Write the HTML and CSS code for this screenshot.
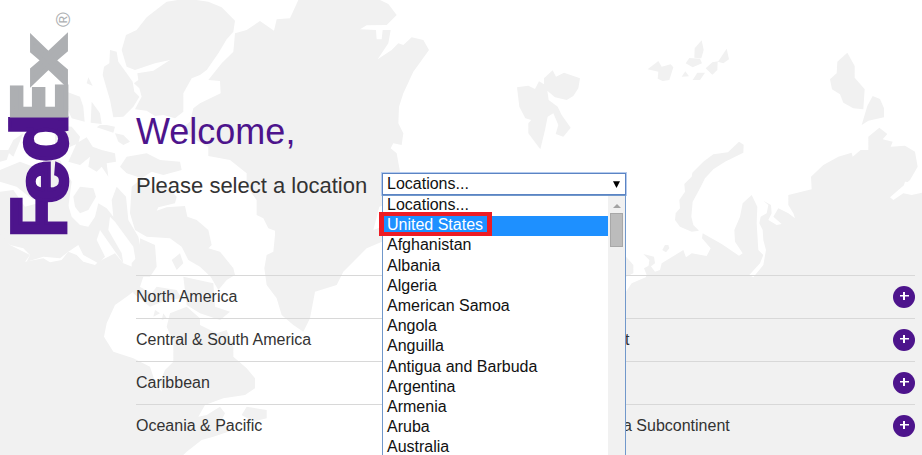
FILE: index.html
```html
<!DOCTYPE html>
<html lang="en">
<head>
<meta charset="utf-8">
<title>FedEx</title>
<link rel="stylesheet" href="styles.css">
</head>
<body>
<svg class="map" width="922" height="455" viewBox="0 0 2766 1365" aria-hidden="true">
  <!-- Greenland -->
  <path class="land" d="M895 0L870 55 830 58 822 92 780 63 740 90 705 100 700 155 665 190 625 240 660 243 662 280 600 310 580 325 570 365 545 385 570 410 625 440 625 468 690 480 740 520 740 560 770 600 770 645 790 655 805 685 825 692 825 705 820 755 800 765 793 805 800 855 830 895 845 945 880 975 910 995 930 955 945 875 1010 855 1030 815 1100 745 1146 725 1146 680 1120 690 1138 620 1200 600 1200 515 1190 460 1172 445 1180 430 1205 435 1210 400 1195 370 1197 320 1210 280 1240 215 1287 150 1270 120 1235 112 1210 135 1195 130 1175 150 1133 178 1165 130 1172 90 1148 90 1145 118 1130 118 1128 90 1080 88 1100 76 1160 75 1190 45 1165 12 1140 0Z"/>
  <!-- Ellesmere and the Arctic islands -->
  <path class="land" d="M500 5L560-4 625 5 665 22 705 62 700 95 680 118 655 160 620 210 600 225 575 235 550 280 550 335 525 355 490 345 465 348 440 332 405 328 425 290 418 265 402 250 415 240 412 220 460 212 510 180 465 190 405 210 380 200 365 150 378 105 410 90 440 52Z"/>
  <path class="land" d="M330 150L350 155 355 185 380 220 398 245 403 275 418 290 400 320 370 350 340 352 330 300 308 225 312 200 328 190ZM265 232L278 258 260 250ZM200 275L240 290 250 320 254 365 215 355 200 320ZM275 305L300 340 305 372 272 368ZM320 375L345 380 340 398 290 382 300 375ZM345 400L370 405 390 425 370 435 355 425ZM165 375L215 380 240 410 235 430 200 445 165 430ZM230 430L260 412 278 440 305 450 345 460 348 485 320 490 325 530 305 500 290 515 265 500 270 470 240 495 205 485ZM380 470L440 460 480 480 540 485 545 510 490 525 455 515 425 535 380 520 360 500ZM240 560L280 565 288 590 265 630 240 640 225 620 220 590ZM0 450L30 450 20 480 0 485ZM70 400L40 470 22 455 40 420ZM130 480L180 480 215 545 205 620 160 640 110 590ZM0 510L60 485 100 500 100 600 50 560 0 545Z"/>
  <!-- Baffin -->
  <path class="land" d="M395 560L420 540 460 570 500 560 530 590 525 610 475 622 470 632 500 622 555 618 562 650 590 660 625 690 635 735 625 745 660 755 700 805 705 825 680 840 655 870 632 830 600 800 565 780 545 740 510 715 440 710 405 690 390 640ZM420 715L465 735 470 800 450 830 395 830 395 790 420 760Z"/>
  <!-- North America -->
  <path class="land" d="M0 575L40 570 75 620 130 605 200 600 215 650 240 675 265 680 285 650 295 610 320 625 340 650 335 600 350 560 378 590 385 660 415 710 425 760 410 800 400 740 345 665 330 650 325 690 365 760 370 790 300 690 290 720 315 770 295 790 250 765 235 735 205 755 180 775 130 770 80 785 90 765 70 745 30 735 0 715Z"/>
  <path class="land" d="M0 700L30 735 90 765 75 785 130 775 150 787 185 780 205 755 230 765 250 785 285 795 295 785 345 760 370 790 400 802 430 790 455 800 430 830 420 860 380 890 345 915 320 970 312 1010 340 1055 400 1075 450 1100 465 1145 485 1175 480 1145 495 1110 520 1085 520 1025 500 980 510 940 560 920 600 955 600 975 650 1000 680 990 700 1040 700 1070 740 1105 765 1135 765 1165 735 1185 670 1195 615 1215 595 1250 620 1245 660 1220 675 1240 660 1270 700 1290 640 1310 605 1320 560 1355 550 1365 0 1365ZM515 780L540 760 550 790 530 810ZM740 1220L800 1230 800 1255 760 1265 725 1245Z"/>
  <path class="land" d="M400 850L455 880 470 860 530 870 545 895 500 900 450 920 400 880ZM465 930L480 940 460 950ZM490 940L500 955 485 960ZM550 830L640 850 645 920 690 935 660 960 600 940 560 915Z"/>
  <!-- Svalbard -->
  <path class="land" d="M1551 262L1585 257 1605 267 1617 244 1632 253 1632 235 1658 211 1668 230 1692 218 1740 235 1735 265 1720 288 1700 300 1665 292 1642 272 1646 300 1673 320 1685 345 1712 383 1690 410 1667 402 1675 375 1660 340 1643 350 1635 390 1621 448 1585 400 1585 370 1594 360 1576 355 1558 320Z"/>
  <!-- Franz Josef Land and Severnaya Zemlya -->
  <path class="land" d="M1943 208L1975 183 1985 200 2012 193 2020 202 2008 240 1988 243 1973 236 1975 215ZM2105 121L2111 150 2104 175 2083 173 2084 145ZM2068 174L2100 176 2106 190 2078 202 2057 190ZM2078 240L2092 218 2115 218 2100 240ZM2045 230L2056 214 2067 229ZM2117 205L2137 187 2155 184 2180 146 2187 178 2170 190 2153 185 2152 210 2137 224Z"/>
  <path class="land" d="M2542 158L2564 198 2564 233 2594 268 2590 328 2560 325 2530 308 2520 283 2496 268 2490 238 2510 220 2512 185ZM2618 288L2640 297 2652 325 2652 352 2605 362 2585 375 2602 318Z"/>
  <!-- Novaya Zemlya -->
  <path class="land" d="M2217 425L2231 434 2230 458 2175 485 2140 508 2115 535 2100 565 2078 605 2074 650 2080 675 2097 692 2075 695 2040 680 2025 660 2027 640 2040 625 2038 600 2055 575 2053 552 2075 530 2077 518 2110 485 2140 463 2184 457Z"/>
  <!-- Eurasia -->
  <path class="land" d="M2365 585L2435 568 2433 530 2470 495 2515 470 2555 458 2558 470 2582 450 2605 450 2605 410 2638 383 2662 402 2648 418 2678 425 2672 440 2715 437 2745 455 2753 500 2730 540 2670 592 2680 600 2710 580 2735 585 2766 578V1365H1878V875L1895 850 1937 832 1940 825 1932 805 1950 795 1965 815 1980 810 1985 790 2050 750 2058 772 2075 760 2120 768 2132 745 2106 715 2108 700 2165 732 2217 767 2228 760 2205 725 2203 690 2220 650 2228 610 2255 585 2272 620 2270 670 2275 750 2290 765 2280 790 2248 825 2260 832 2290 795 2298 750 2290 720 2288 690 2278 670 2282 650 2300 640 2305 615 2290 602 2313 615 2315 640 2305 660 2330 675 2345 672 2320 650 2335 625 2365 640 2385 655 2380 640 2365 615Z"/>
  <path class="sea" d="M2695 582L2710 562 2720 580 2730 565 2712 555 2715 545 2747 548 2745 580 2725 575Z"/>
  <path class="land" d="M1987 750L1995 735 2005 735 2008 745 1998 757ZM1930 762L1962 770 1965 790 1945 805 1948 780ZM1878 770L1900 795 1900 820 1878 830Z"/>
</svg>

<header class="brand">
  <svg class="logo" width="110" height="245" viewBox="0 0 110 245" role="img" aria-label="FedEx">
    <g class="wordmark" transform="translate(67 235) rotate(-90)">
      <text class="fed" transform="translate(-2 -1) scale(.8 .96)">F</text>
      <text class="fed" transform="translate(31.5 0) scale(.94 .9)">e</text>
      <text class="fed" transform="translate(73 0) scale(.97 .95)">d</text>
      <text class="ex heavy" transform="translate(115.5 -1) scale(.65 .95)">E</text>
      <text class="ex heavy" transform="translate(151 -1) scale(1.04 .78)">x</text>
      <text class="reg" x="208" y="3">®</text>
    </g>
  </svg>
</header>

<main class="content">
  <h1 class="title">Welcome,</h1>
  <div class="picker">
    <span class="prompt">Please select a location</span>
    <div class="select">
      <span>Locations...</span>
      <svg width="7" height="7" viewBox="0 0 7 7"><path d="M0 0.3H7L3.5 7Z"/></svg>
      <div class="menu">
        <ul class="options">
          <li>Locations...</li>
          <li class="active">United States</li>
          <li>Afghanistan</li>
          <li>Albania</li>
          <li>Algeria</li>
          <li>American Samoa</li>
          <li>Angola</li>
          <li>Anguilla</li>
          <li>Antigua and Barbuda</li>
          <li>Argentina</li>
          <li>Armenia</li>
          <li>Aruba</li>
          <li>Australia</li>
        </ul>
        <div class="scrollbar">
          <svg width="8" height="4" viewBox="0 0 8 4"><path d="M0 4L4 0L8 4Z"/></svg>
          <div class="thumb"></div>
        </div>
        <div class="callout"></div>
      </div>
    </div>
  </div>
  <div class="regions">
    <div class="region"><span>North America</span><span></span><b class="plus"></b></div>
    <div class="region"><span>Central &amp; South America</span><span>t</span><b class="plus"></b></div>
    <div class="region"><span>Caribbean</span><span></span><b class="plus"></b></div>
    <div class="region"><span>Oceania &amp; Pacific</span><span class="sub">a Subcontinent</span><b class="plus"></b></div>
  </div>
</main>
</body>
</html>
```

FILE: styles.css
```css
* { box-sizing: border-box; }
body {
  margin: 0;
  width: 922px;
  height: 455px;
  overflow: hidden;
  position: relative;
  display: flex;
  background: #fff;
  color: #333;
  font: 16px "Liberation Sans", Arial, sans-serif;
}
.map { position: absolute; left: 0; top: 0; z-index: -1; }
.land { fill: #f1f1f1; }
.sea { fill: #fff; }
.brand { width: 136px; flex: none; }
.logo { display: block; overflow: visible; }
.wordmark text { font-family: "Liberation Sans", Arial, sans-serif; font-weight: 700; font-size: 82px; }
.wordmark .fed { fill: #4d148c; stroke: #4d148c; stroke-width: 4px; }
.wordmark .ex { fill: #adafb2; stroke: #adafb2; stroke-width: 3px; }
.wordmark .heavy { stroke-width: 5px; }
.wordmark .reg { fill: #adafb2; font-size: 20px; font-weight: 400; }
.content { width: 779px; padding-top: 111px; }
.title { margin: 0; font-size: 36px; line-height: 42px; font-weight: 400; color: #4d148c; }
.picker { display: flex; margin-top: 20px; height: 102px; }
.prompt { width: 246px; font-size: 22px; line-height: 26px; white-space: nowrap; }
.select {
  position: relative;
  width: 244px;
  height: 22px;
  display: flex;
  align-items: center;
  justify-content: space-between;
  padding: 0 5px 0 4px;
  background: #fff;
  border: 1px solid #5b84c4;
  box-shadow: 0 0 0 1px #b5cbed;
  color: #111;
  line-height: 20px;
}
.menu {
  position: absolute;
  left: -1px;
  top: 21px;
  width: 244px;
  height: 280px;
  display: flex;
  background: #fff;
  border: 1px solid #7198cb;
  z-index: 2;
}
.options { flex: 1; margin: 0; padding: 0; list-style: none; }
.options li { height: 20.2px; line-height: 17.4px; padding-left: 4px; }
.options .active { background: #1e90ff; color: #fff; }
.scrollbar { width: 17px; background: #f1f1f1; display: flex; flex-direction: column; align-items: center; padding-top: 8px; }
.scrollbar svg { fill: #a3a3a3; flex: none; }
.thumb { width: 13px; height: 34px; margin-top: 5px; background: #bcbcbc; border: 1px solid #a8a8a8; }
.callout { position: absolute; left: -4px; top: 16px; width: 113px; height: 24px; border: 4px solid #ed1c24; border-left-width: 5px; border-right-width: 5px; }
.region { display: flex; align-items: center; height: 43px; border-top: 1px solid #d8d8d8; }
.region span:first-child { width: 489px; }
.region span:nth-child(2) { flex: 1; }
.region .sub { margin-left: -2px; }
.plus {
  width: 22px;
  height: 22px;
  border-radius: 50%;
  background: linear-gradient(#fff, #fff) 7px 9px / 9px 1.5px no-repeat, linear-gradient(#fff, #fff) 10px 6px / 2px 8px no-repeat, #4d148c;
}
```
